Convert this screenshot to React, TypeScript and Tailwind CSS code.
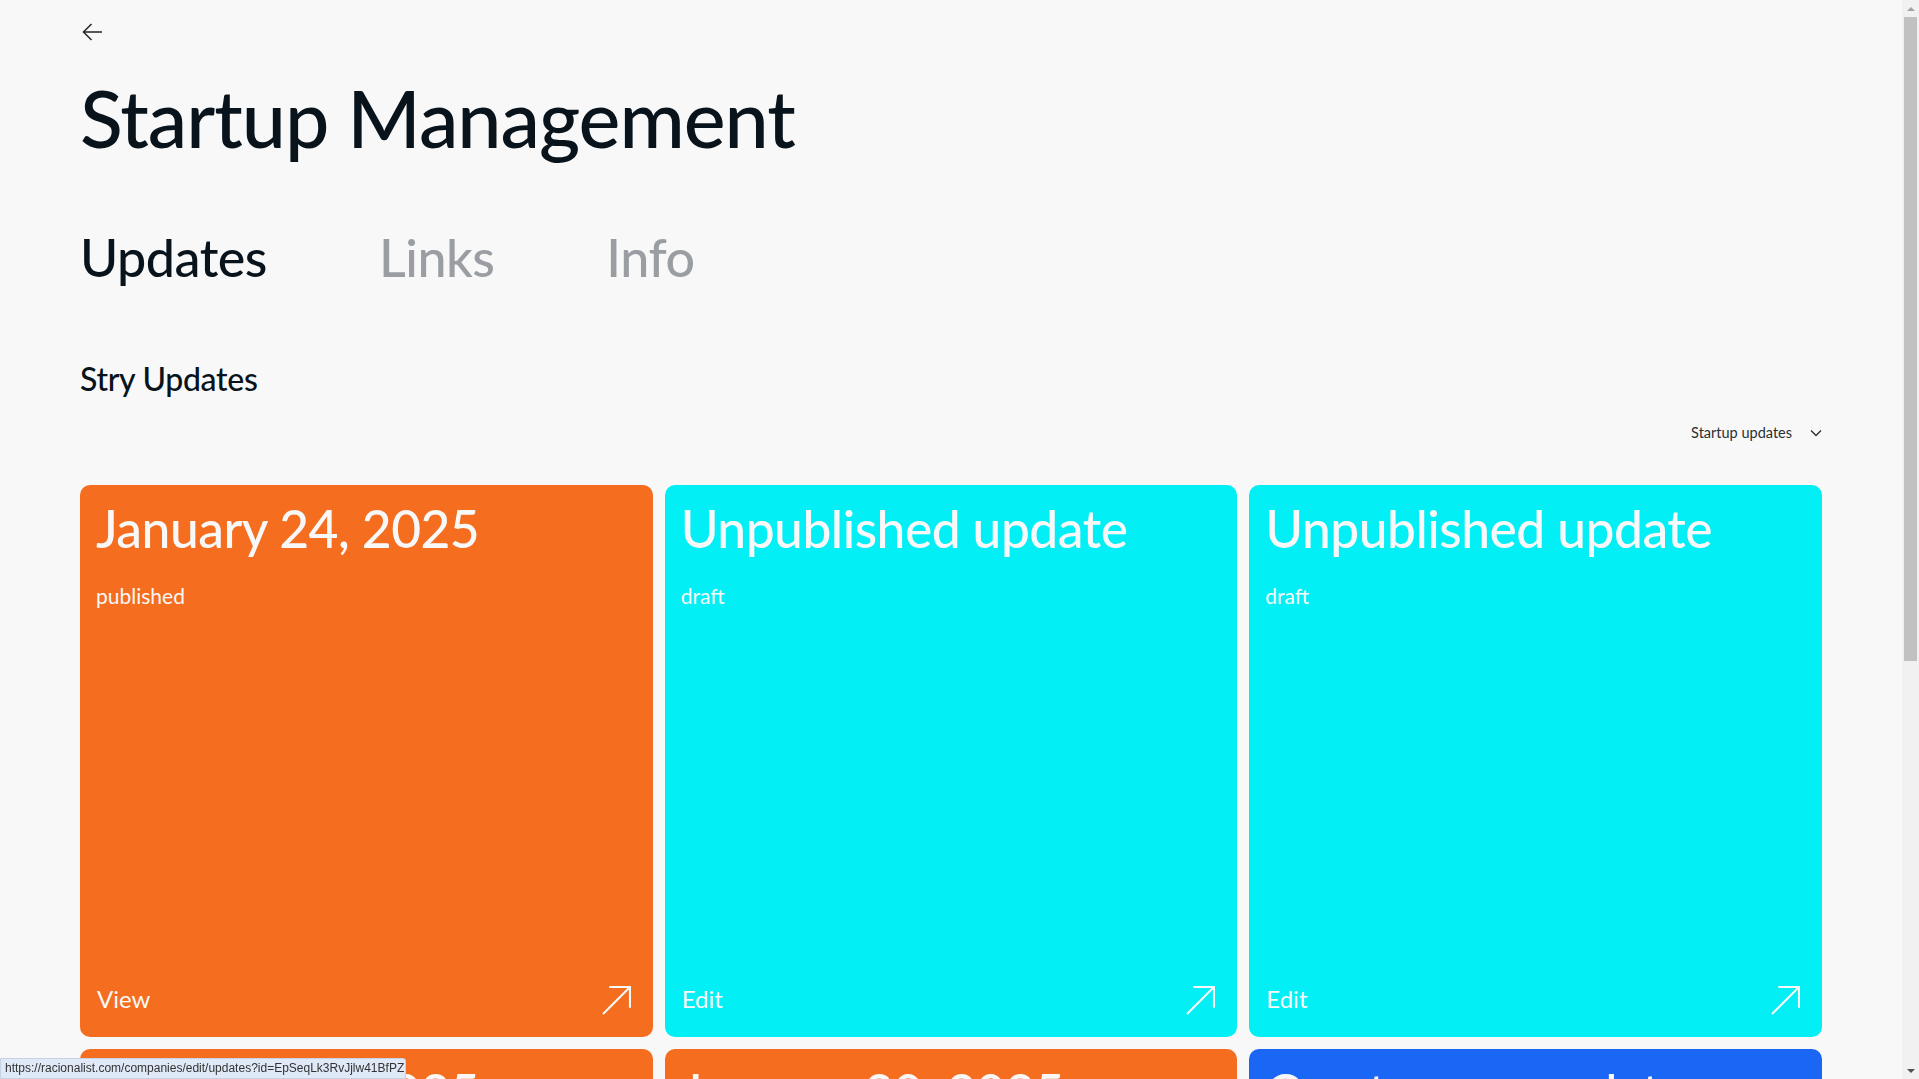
import React from 'react';

type Update = {
  id: string;
  title: string;
  status?: string;
  action?: string;
  tone: 'orange' | 'cyan' | 'blue';
};

const updates: Update[] = [
  { id: 'u1', title: 'January 24, 2025', status: 'published', action: 'View', tone: 'orange' },
  { id: 'u2', title: 'Unpublished update', status: 'draft', action: 'Edit', tone: 'cyan' },
  { id: 'u3', title: 'Unpublished update', status: 'draft', action: 'Edit', tone: 'cyan' },
  { id: 'u4', title: 'January 28, 2025', status: 'published', action: 'View', tone: 'orange' },
  { id: 'u5', title: 'January 30, 2025', status: 'published', action: 'View', tone: 'orange' },
  { id: 'u6', title: 'Create new update', tone: 'blue' },
];

const toneClass = {
  orange: 'bg-[#f56d1e]',
  cyan: 'bg-[#02eff5]',
  blue: 'bg-[#1a66f5]',
};

function ArrowUpRight() {
  return (
    <svg width="29" height="29" viewBox="0 0 28 28" fill="none" stroke="#f8f8f8" strokeWidth="2">
      <path d="M1 27 L27 1" />
      <path d="M7 1 H27 V21" />
    </svg>
  );
}

function UpdateCard({ update }: { update: Update }) {
  return (
    <a
      href="#"
      className={`flex h-[552px] flex-col justify-between rounded-[10px] px-4 pt-3 pb-[22px] text-[#f8f8f8] ${toneClass[update.tone]}`}
    >
      <div>
        <h3 className="text-[51.5px] font-medium leading-[62px] tracking-[-0.5px]">{update.title}</h3>
        {update.status && <p className="mt-[25px] text-[21px] leading-6">{update.status}</p>}
      </div>
      {update.action && (
        <div className="flex items-end justify-between">
          <span className="pl-[1px] text-[24px] leading-8">{update.action}</span>
          <span className="mr-[6px]">
            <ArrowUpRight />
          </span>
        </div>
      )}
    </a>
  );
}

// fake window scrollbar, as in the capture
function Scrollbar() {
  return (
    <div className="fixed top-0 right-0 flex h-screen w-[17px] flex-col bg-[#f1f1f1]">
      <div className="flex h-[17px] items-center justify-center">
        <div className="h-0 w-0 border-x-[4px] border-b-[4px] border-x-transparent border-b-[#a3a3a3]" />
      </div>
      <div className="mx-[2px] h-[644px] bg-[#c1c1c1]" />
      <div className="flex-1" />
      <div className="flex h-[17px] items-center justify-center">
        <div className="h-0 w-0 border-x-[4px] border-t-[4px] border-x-transparent border-t-[#505050]" />
      </div>
    </div>
  );
}

export default function App() {
  return (
    <div className="min-h-screen bg-[#f8f8f8] font-['Lato',sans-serif] text-[#08131b]">
      <div className="mr-[17px] px-[80px] pt-[23px]">
        {/* Back */}
        <button className="ml-[2px] block text-[#1f2428]">
          <svg width="20" height="18" viewBox="0 0 20 18" fill="none" stroke="currentColor" strokeWidth="1.5">
            <path d="M20 9 H1.5" />
            <path d="M9.5 1 L1.5 9 L9.5 17" />
          </svg>
        </button>

        <h1 className="mt-[33px] text-[79px] font-medium leading-[88px] tracking-[-1px]">Startup Management</h1>

        {/* Tabs */}
        <nav className="mt-[64px] flex gap-[112px] text-[52px] font-medium leading-[62px]">
          <span className="tracking-[-0.5px]">Updates</span>
          <span className="text-[#9a9ea2] tracking-[-0.5px]">Links</span>
          <span className="text-[#9a9ea2] tracking-[-0.5px]">Info</span>
        </nav>

        <h2 className="mt-[72px] text-[32px] font-medium leading-[38px] tracking-[-0.3px]">Stry Updates</h2>

        <div className="mt-[25px] flex justify-end">
          <button className="flex items-center gap-[18px] text-[14.5px] leading-5 text-[#2a2f33]">
            <span>Startup updates</span>
            <svg width="12" height="8" viewBox="0 0 12 8" fill="none" stroke="currentColor" strokeWidth="1.3">
              <path d="M1 1.5 L6 6.5 L11 1.5" />
            </svg>
          </button>
        </div>

        <div className="mt-[42px] grid grid-cols-3 gap-3 pb-10">
          {updates.map(u => (
            <UpdateCard key={u.id} update={u} />
          ))}
        </div>
      </div>

      <Scrollbar />

      {/* browser status bubble */}
      <div className="fixed bottom-0 left-0 h-[21px] w-[406px] overflow-hidden whitespace-nowrap rounded-tr-[3px] border border-[#c7d3e3] bg-[#dfe9f8] px-[4px] font-['Liberation_Sans',sans-serif] text-[12px] leading-[19px] text-[#333]">
        https://racionalist.com/companies/edit/updates?id=EpSeqLk3RvJjlw41BfPZ
      </div>
    </div>
  );
}
